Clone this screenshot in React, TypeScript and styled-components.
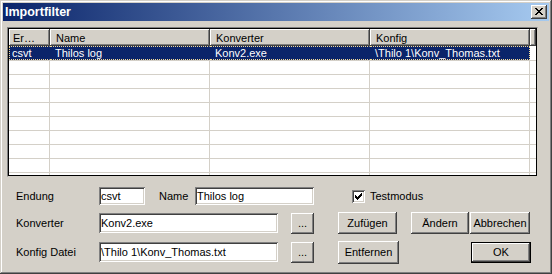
import styled, { createGlobalStyle } from "styled-components";

const FACE = "#d4d0c8";
const NAVY = "#0a246a";

const GlobalStyle = createGlobalStyle`
  html, body {
    margin: 0;
    padding: 0;
    background: ${FACE};
  }
  body {
    font-family: "Liberation Sans", Arial, sans-serif;
    font-size: 11px;
    color: #000;
  }
`;

const columns = [
  { key: "ext", title: "Er…" },
  { key: "name", title: "Name" },
  { key: "conv", title: "Konverter" },
  { key: "cfg", title: "Konfig" },
] as const;

type Entry = { ext: string; name: string; conv: string; cfg: string };

const entries: Entry[] = [
  { ext: "csvt", name: "Thilos log", conv: "Konv2.exe", cfg: "\\Thilo 1\\Konv_Thomas.txt" },
];

const EMPTY_ROWS = 9;
const TEMPLATE = "41px 160px 160px 160px 1fr";

export default function App() {
  return (
    <>
      <GlobalStyle />
      <Window>
        <TitleBar>
          <TitleText>Importfilter</TitleText>
          <CloseButton>
            <svg width="8" height="7" viewBox="0 0 8 7" shapeRendering="crispEdges">
              <path
                fill="#000"
                d="M0 0h2v1h-2z M6 0h2v1h-2z M1 1h2v1h-2z M5 1h2v1h-2z M2 2h4v1h-4z M3 3h2v1h-2z M2 4h4v1h-4z M1 5h2v1h-2z M5 5h2v1h-2z M0 6h2v1h-2z M6 6h2v1h-2z"
              />
            </svg>
          </CloseButton>
        </TitleBar>

        <ListOuter>
          <ListInner>
            <Header>
              {columns.map((c, i) => (
                <HeaderCell key={c.key} $first={i === 0}>
                  {c.title}
                </HeaderCell>
              ))}
              <HeaderCell />
            </Header>
            {entries.map((e, r) => (
              <Row key={r} $first={r === 0}>
                {columns.map((c, i) => (
                  <Cell
                    key={c.key}
                    $sel
                    $first={i === 0}
                    $last={i === columns.length - 1}
                  >
                    {e[c.key]}
                  </Cell>
                ))}
                <Filler />
              </Row>
            ))}
            {Array.from({ length: EMPTY_ROWS }).map((_, r) => (
              <Row key={`e${r}`}>
                {columns.map((c, i) => (
                  <Cell key={c.key} $first={i === 0} />
                ))}
                <Filler />
              </Row>
            ))}
          </ListInner>
        </ListOuter>

        <Form>
          <FormRow $h={18} $top={0}>
            <Label>Endung</Label>
            <Field $w={46} $h={18}>csvt</Field>
            <Label $w={36} $ml={14}>
              Name
            </Label>
            <Field $w={119} $h={18}>Thilos log</Field>
            <CheckBox $ml={38}>
              <svg width="7" height="7" viewBox="0 0 7 7" shapeRendering="crispEdges">
                <path
                  fill="#000"
                  d="M6 0h1v1h-1z M5 1h2v1h-2z M0 2h1v1h-1z M4 2h3v1h-3z M0 3h2v1h-2z M3 3h3v1h-3z M0 4h5v1h-5z M1 5h3v1h-3z M2 6h1v1h-1z"
                />
              </svg>
            </CheckBox>
            <CheckLabel>Testmodus</CheckLabel>
          </FormRow>

          <FormRow $h={22} $top={7}>
            <Label>Konverter</Label>
            <Field $w={179} $h={20}>Konv2.exe</Field>
            <Button $w={23} $h={21} $ml={13}>...</Button>
            <Button $w={59} $h={22} $ml={24}>Zufügen</Button>
            <Button $w={58} $h={22} $ml={14}>Ändern</Button>
            <Button $w={60} $h={22} $ml={1}>Abbrechen</Button>
          </FormRow>

          <FormRow $h={24} $top={6}>
            <Label>Konfig Datei</Label>
            <Field $w={179} $h={20}>\Thilo 1\Konv_Thomas.txt</Field>
            <Button $w={23} $h={21} $ml={13}>...</Button>
            <Button $w={61} $h={23} $ml={24}>Entfernen</Button>
            <Button $w={60} $h={21} $ml={72} $default>
              OK
            </Button>
          </FormRow>
        </Form>
      </Window>
    </>
  );
}

const raised = `
  box-shadow: inset -1px -1px #404040, inset 1px 1px #fff,
    inset -2px -2px #808080, inset 2px 2px ${FACE};
`;

const sunken = `
  box-shadow: inset 1px 1px #808080, inset -1px -1px #fff,
    inset 2px 2px #404040, inset -2px -2px ${FACE};
`;

const Window = styled.div`
  width: 552px;
  height: 274px;
  box-sizing: border-box;
  padding: 3px;
  background: ${FACE};
  box-shadow: inset -1px -1px #404040, inset 1px 1px ${FACE},
    inset -2px -2px #808080, inset 2px 2px #fff;
  display: flex;
  flex-direction: column;
  overflow: hidden;
`;

const TitleBar = styled.div`
  height: 18px;
  flex: none;
  display: flex;
  align-items: center;
  justify-content: space-between;
  padding: 0 2px 0 2px;
  background: linear-gradient(to right, ${NAVY}, #a6caf0);
`;

const TitleText = styled.span`
  color: #fff;
  font-weight: bold;
  font-size: 12.5px;
  line-height: 18px;
`;

const CloseButton = styled.div`
  width: 16px;
  height: 14px;
  box-sizing: border-box;
  padding: 3px 0 0 4px;
  background: ${FACE};
  ${raised}
  display: flex;
  align-items: flex-start;

  svg {
    display: block;
  }
`;

const ListOuter = styled.div`
  margin: 6px 0 0 4px;
  width: 531px;
  height: 150px;
  box-sizing: border-box;
  border: 1px solid;
  border-color: #808080 ${FACE} ${FACE} #808080;
  flex: none;
`;

const ListInner = styled.div`
  height: 100%;
  box-sizing: border-box;
  border: 1px solid #000;
  background: #fff;
  overflow: hidden;
`;

const Header = styled.div`
  display: grid;
  grid-template-columns: ${TEMPLATE};
  height: 17px;
`;

const HeaderCell = styled.div<{ $first?: boolean }>`
  box-sizing: border-box;
  height: 17px;
  background: ${FACE};
  ${raised}
  padding-left: ${(p) => (p.$first ? 4 : 6)}px;
  display: flex;
  align-items: center;
  white-space: nowrap;
  overflow: hidden;
`;

const Row = styled.div<{ $first?: boolean }>`
  display: grid;
  grid-template-columns: ${TEMPLATE};
  height: 14px;
  box-sizing: border-box;
  border-top: ${(p) => (p.$first ? "none" : `1px solid ${FACE}`)};
`;

const FOCUS = "1px dotted #f5db95";

const Cell = styled.div<{ $sel?: boolean; $first?: boolean; $last?: boolean }>`
  box-sizing: border-box;
  border-right: 1px solid ${(p) => (p.$sel ? NAVY : FACE)};
  background: ${(p) => (p.$sel ? NAVY : "#fff")};
  color: ${(p) => (p.$sel ? "#fff" : "#000")};
  padding-left: ${(p) => (p.$first ? 3 : 5)}px;
  line-height: 12px;
  white-space: nowrap;
  overflow: hidden;
  ${(p) =>
    p.$sel &&
    `
    border-top: ${FOCUS};
    border-bottom: ${FOCUS};
  `}
  ${(p) => p.$sel && p.$first && `border-left: ${FOCUS}; padding-left: 2px;`}
  ${(p) => p.$sel && p.$last && `border-right: ${FOCUS};`}
`;

const Filler = styled.div`
  background: #fff;
`;

const Form = styled.div`
  margin-top: 10px;
  padding-left: 13px;
  display: flex;
  flex-direction: column;
`;

const FormRow = styled.div<{ $h: number; $top: number }>`
  display: flex;
  align-items: center;
  height: ${(p) => p.$h}px;
  margin-top: ${(p) => p.$top}px;
`;

const Label = styled.div<{ $w?: number; $ml?: number }>`
  flex: none;
  width: ${(p) => p.$w ?? 83}px;
  margin-left: ${(p) => p.$ml ?? 0}px;
  white-space: nowrap;
`;

const Field = styled.div<{ $w: number; $h: number }>`
  flex: none;
  width: ${(p) => p.$w}px;
  height: ${(p) => p.$h}px;
  box-sizing: border-box;
  padding: 0 2px 0 2px;
  background: #fff;
  ${sunken}
  display: flex;
  align-items: center;
  white-space: nowrap;
  overflow: hidden;
`;

const CheckBox = styled.div<{ $ml: number }>`
  flex: none;
  width: 13px;
  height: 13px;
  box-sizing: border-box;
  margin-left: ${(p) => p.$ml}px;
  padding: 3px 0 0 3px;
  background: #fff;
  ${sunken}

  svg {
    display: block;
  }
`;

const CheckLabel = styled.span`
  margin-left: 5px;
`;

const Button = styled.div<{ $w: number; $h: number; $ml: number; $default?: boolean }>`
  flex: none;
  width: ${(p) => p.$w}px;
  height: ${(p) => p.$h}px;
  margin-left: ${(p) => p.$ml}px;
  box-sizing: border-box;
  background: ${FACE};
  ${raised}
  ${(p) =>
    p.$default &&
    `
    border: 1px solid #000;
    box-shadow: inset -1px -1px #404040, inset 1px 1px #fff,
      inset -2px -2px #808080;
  `}
  display: flex;
  align-items: center;
  justify-content: center;
  white-space: nowrap;
`;
